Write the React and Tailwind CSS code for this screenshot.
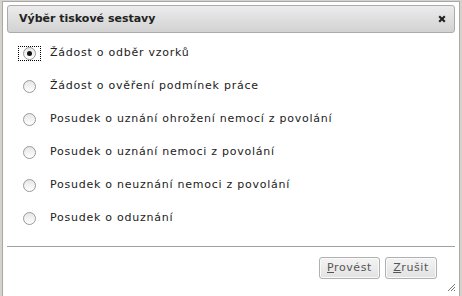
import React from 'react';

const moznosti = [
  'Žádost o odběr vzorků',
  'Žádost o ověření podmínek práce',
  'Posudek o uznání ohrožení nemocí z povolání',
  'Posudek o uznání nemoci z povolání',
  'Posudek o neuznání nemoci z povolání',
  'Posudek o oduznání',
];

function Radio({ checked }) {
  return (
    <span className="relative flex h-[13px] w-[13px] items-center justify-center rounded-full border border-[#9a9a9a] bg-gradient-to-b from-[#e6e6e6] to-white">
      {checked && <span className="h-[5px] w-[5px] rounded-full bg-[#111]" />}
    </span>
  );
}

function Tlacitko({ prvni, zbytek, sirka }) {
  return (
    <button
      type="button"
      className={`h-[22px] ${sirka} rounded-[3px] border border-[#b0b0b0] bg-gradient-to-b from-[#f4f4f4] to-[#e2e2e2] text-[11px] tracking-[0.6px] text-[#555] shadow-[inset_0_0_0_1px_#fafafa]`}
    >
      <span className="underline">{prvni}</span>
      {zbytek}
    </button>
  );
}

export default function App() {
  return (
    <div className="relative h-[296px] w-[462px] overflow-hidden bg-[#d6d3cc] pl-[2px] pt-[1px] font-['DejaVu_Sans',Verdana,sans-serif]">
      <div className="relative flex h-[300px] w-[458px] flex-col border border-[#a8a8a8] bg-white px-[4px] pt-[3px]">
        <div className="flex h-[28px] items-center justify-between rounded-[3px] border border-[#ababab] bg-gradient-to-b from-[#ececec] to-[#d2d2d2] pl-[11px] pr-[8px]">
          <span className="text-[11px] font-bold text-[#222]">Výběr tiskové sestavy</span>
          <svg width="8" height="8" viewBox="0 0 8 8">
            <path d="M1.2 1.2 L6.8 6.8 M6.8 1.2 L1.2 6.8" stroke="#222" strokeWidth="2.1" />
          </svg>
        </div>

        <div className="flex flex-col pt-[4px]">
          {moznosti.map((text, i) => (
            <div key={text} className="flex h-[33px] items-center">
              <span
                className={`ml-[11px] flex h-[15px] w-[23px] items-center justify-center ${
                  i === 0 ? 'border border-dotted border-black' : 'border border-transparent'
                }`}
              >
                <Radio checked={i === 0} />
              </span>
              <span className="ml-[9px] text-[11px] tracking-[0.75px] text-[#222]">{text}</span>
            </div>
          ))}
        </div>

        <div className="mt-[11px] border-t border-[#a0a0a0]" />

        <div className="flex justify-end gap-[5px] pr-[18px] pt-[10px]">
          <Tlacitko prvni="P" zbytek="rovést" sirka="w-[61px]" />
          <Tlacitko prvni="Z" zbytek="rušit" sirka="w-[52px]" />
        </div>
      </div>
      <svg className="absolute left-[446px] top-[282px]" width="10" height="10" viewBox="0 0 10 10">
        <path d="M9 2 L2 9 M9 5 L5 9 M9 8 L8 9" stroke="#777" strokeWidth="1" />
      </svg>
    </div>
  );
}
